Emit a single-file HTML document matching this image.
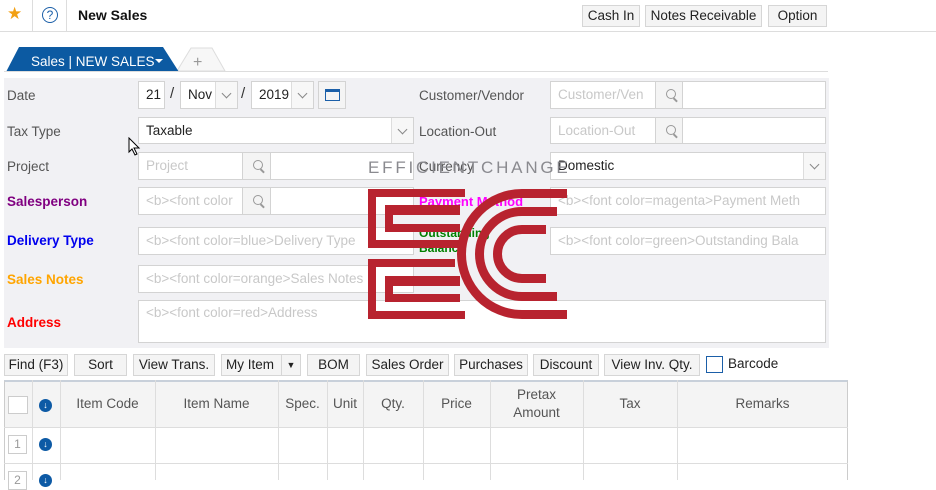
<!DOCTYPE html>
<html><head><style>
*{box-sizing:border-box;margin:0;padding:0}
body{width:936px;height:480px;overflow:hidden;background:#fff;font-family:"Liberation Sans",sans-serif;font-size:13px;color:#333;position:relative}
.a{position:absolute}
.btn{position:absolute;border:1px solid #d6d6d6;background:#f4f4f4;height:22px;line-height:20px;text-align:center;font-size:13.5px;color:#222}
.lbl{position:absolute;left:7px;font-size:13.5px;color:#555}
.rl{position:absolute;left:419px;font-size:13.5px;color:#555}
.f{position:absolute;background:#fff;border:1px solid #d3d3d3;height:28px;line-height:26px;padding-left:7px;color:#c8c8c8;font-size:13.5px;white-space:nowrap;overflow:hidden}
.s{position:absolute;background:#f4f4f4;border:1px solid #d3d3d3;height:28px}
.s:after{content:"";position:absolute;left:10px;top:7px;width:8px;height:8px;border:1.5px solid #999;border-radius:50%}
.s:before{content:"";position:absolute;left:17px;top:17px;width:5px;height:1.5px;background:#999;transform:rotate(45deg)}
.dd{position:absolute;width:22px;border-left:1px solid #ddd;background:#f7f7f7;top:0;bottom:0;right:0}
.dd:after{content:"";position:absolute;left:7px;top:8px;width:6px;height:6px;border-right:1px solid #888;border-bottom:1px solid #888;transform:rotate(45deg)}
b.c{font-weight:bold;position:absolute;left:7px;font-size:13.5px}
.vl{position:absolute;top:380px;width:1px;height:100px;background:#ddd}
.hd{position:absolute;top:380px;height:47px;display:flex;align-items:center;justify-content:center;text-align:center;font-size:13.5px;color:#555;line-height:18px}
.dn{position:absolute;width:13px;height:13px;border-radius:50%;background:#0d5aa5;color:#fff;font-size:9px;line-height:13px;text-align:center;font-weight:bold}
</style></head><body>
<div class="a" style="left:7px;top:4px;color:#f2a013;font-size:17px">★</div>
<div class="a" style="left:32px;top:0;width:1px;height:31px;background:#ddd"></div>
<div class="a" style="left:42px;top:7px;width:16px;height:16px;border:1.3px solid #1b5fa8;border-radius:50%;color:#1b5fa8;font-size:12px;line-height:14px;text-align:center">?</div>
<div class="a" style="left:66px;top:0;width:1px;height:31px;background:#ddd"></div>
<div class="a" style="left:78px;top:7px;font-weight:bold;font-size:14px;color:#111">New Sales</div>
<div class="a" style="left:0;top:31px;width:936px;height:1px;background:#ddd"></div>
<div class="btn" style="left:582px;top:5px;width:58px">Cash In</div>
<div class="btn" style="left:645px;top:5px;width:117px">Notes Receivable</div>
<div class="btn" style="left:768px;top:5px;width:59px">Option</div>
<svg class="a" style="left:0;top:44px" width="240" height="30"><path d="M177 27 L191 4 L212 4 L225 27 Z" fill="#f7f7f7" stroke="#ddd"/><text x="193" y="23" font-size="16" fill="#999" font-family="Liberation Sans">+</text><path d="M6 28 L19 3 L163 3 L179 28 Z" fill="#0c5aa2"/><text x="31" y="22" font-size="13.5" fill="#fff" font-family="Liberation Sans">Sales | NEW SALES</text><path d="M155 15 L163 15 L159 19Z" fill="#fff"/></svg>
<div class="a" style="left:4px;top:71px;width:824px;height:1px;background:#ddd"></div>
<div class="a" style="left:4px;top:78px;width:825px;height:270px;background:#f1f1f4"></div>
<div class="lbl" style="top:88px">Date</div>
<div class="f" style="left:138px;top:81px;width:27px;color:#222">21</div>
<div class="a" style="left:170px;top:85px;font-size:15px">/</div>
<div class="f" style="left:180px;top:81px;width:58px;color:#222">Nov<span class="dd"></span></div>
<div class="a" style="left:241px;top:85px;font-size:15px">/</div>
<div class="f" style="left:251px;top:81px;width:63px;color:#222">2019<span class="dd"></span></div>
<div class="a" style="left:318px;top:81px;width:28px;height:28px;border:1px solid #d3d3d3;background:#f4f4f4"><div class="a" style="left:6px;top:7px;width:15px;height:12px;border:1.5px solid #1b5fa8;border-top-width:3px"></div></div>
<div class="lbl" style="top:124px">Tax Type</div>
<div class="f" style="left:138px;top:117px;width:276px;height:27px;color:#222">Taxable<span class="dd"></span></div>
<div class="lbl" style="top:159px">Project</div>
<div class="f" style="left:138px;top:152px;width:105px">Project</div><div class="s" style="left:242px;top:152px;width:29px"></div><div class="f" style="left:270px;top:152px;width:144px"></div>
<b class="c" style="top:194px;color:#800080">Salesperson</b>
<div class="f" style="left:138px;top:187px;width:105px">&lt;b&gt;&lt;font color</div><div class="s" style="left:242px;top:187px;width:29px"></div><div class="f" style="left:270px;top:187px;width:144px"></div>
<b class="c" style="top:233px;color:#0000ee">Delivery Type</b>
<div class="f" style="left:138px;top:227px;width:276px">&lt;b&gt;&lt;font color=blue&gt;Delivery Type</div>
<b class="c" style="top:272px;color:#ffa500">Sales Notes</b>
<div class="f" style="left:138px;top:265px;width:276px">&lt;b&gt;&lt;font color=orange&gt;Sales Notes</div>
<b class="c" style="top:315px;color:#ff0000">Address</b>
<div class="f" style="left:138px;top:300px;width:688px;height:43px;line-height:24px">&lt;b&gt;&lt;font color=red&gt;Address</div>
<div class="rl" style="top:88px">Customer/Vendor</div>
<div class="f" style="left:550px;top:81px;width:106px">Customer/Ven</div><div class="s" style="left:655px;top:81px;width:28px"></div><div class="f" style="left:682px;top:81px;width:144px"></div>
<div class="rl" style="top:124px">Location-Out</div>
<div class="f" style="left:550px;top:117px;width:106px;height:27px">Location-Out</div><div class="s" style="left:655px;top:117px;width:28px;height:27px"></div><div class="f" style="left:682px;top:117px;width:144px;height:27px"></div>
<div class="rl" style="top:159px">Currency</div>
<div class="f" style="left:550px;top:152px;width:276px;color:#222">Domestic<span class="dd"></span></div>
<b class="a" style="left:419px;top:194px;color:#ff00ff;font-size:13px">Payment Method</b>
<div class="f" style="left:550px;top:187px;width:276px">&lt;b&gt;&lt;font color=magenta&gt;Payment Meth</div>
<b class="a" style="left:419px;top:226px;color:#008000;font-size:12px;line-height:15px">Outstanding<br>Balance</b>
<div class="f" style="left:550px;top:227px;width:276px">&lt;b&gt;&lt;font color=green&gt;Outstanding Bala</div>
<svg class="a" style="left:128px;top:137px" width="14" height="20"><path d="M1 1 L1 15 L4 12 L7 18 L9 17 L6 11 L11 11 Z" fill="#fff" stroke="#000"/></svg>
<div class="a" style="left:368px;top:158px;font-size:17px;letter-spacing:2.8px;color:#8a8a8f">EFFICIENTCHANGE</div>
<svg class="a" style="left:360px;top:180px" width="220" height="150">
<g fill="#b8232f" fill-rule="evenodd">
<path d="M8 9 H105 V17 H16 V60 H100 V68 H8 Z"/>
<path d="M25 25 H100 V52 H25 Z M33 35 H100 V44 H33 Z"/>
<path d="M8 79 H95 V87 H16 V131 H105 V139 H8 Z"/>
<path d="M25 96 H100 V122 H25 Z M33 106 H100 V114 H33 Z"/>
</g>
<g fill="none" stroke="#b8232f" stroke-width="9">
<path d="M207 13.5 H162 A60.5 60.5 0 0 0 162 134.5 H207"/>
<path d="M197 31.5 H162 A42.5 42.5 0 0 0 162 116.5 H197"/>
<path d="M186 49.5 H162 A24.5 24.5 0 0 0 162 98.5 H186"/>
</g></svg>
<div class="btn" style="left:4px;top:354px;width:64px">Find (F3)</div>
<div class="btn" style="left:74px;top:354px;width:53px">Sort</div>
<div class="btn" style="left:133px;top:354px;width:82px">View Trans.</div>
<div class="btn" style="left:221px;top:354px;width:80px;text-align:left;padding-left:4px">My Item<span class="a" style="right:0;top:0;width:19px;height:20px;border-left:1px solid #d6d6d6;font-size:9px;text-align:center">▼</span></div>
<div class="btn" style="left:307px;top:354px;width:53px">BOM</div>
<div class="btn" style="left:366px;top:354px;width:83px">Sales Order</div>
<div class="btn" style="left:454px;top:354px;width:74px">Purchases</div>
<div class="btn" style="left:533px;top:354px;width:66px">Discount</div>
<div class="btn" style="left:604px;top:354px;width:96px">View Inv. Qty.</div>
<div class="a" style="left:706px;top:356px;width:17px;height:17px;border:1.5px solid #1b5fa8;background:#fff"></div>
<div class="a" style="left:728px;top:356px;font-size:13.5px;color:#222">Barcode</div>
<div class="a" style="left:4px;top:380px;width:844px;height:100px;border:1px solid #ccc;border-top:2px solid #c8d0da;border-bottom:none"></div>
<div class="a" style="left:5px;top:382px;width:842px;height:45px;background:#f4f4f4"></div>
<div class="a" style="left:4px;top:427px;width:844px;height:1px;background:#ddd"></div>
<div class="a" style="left:4px;top:463px;width:844px;height:1px;background:#ddd"></div>
<div class="vl" style="left:32px"></div><div class="vl" style="left:60px"></div><div class="vl" style="left:155px"></div><div class="vl" style="left:278px"></div><div class="vl" style="left:327px"></div><div class="vl" style="left:363px"></div><div class="vl" style="left:423px"></div><div class="vl" style="left:490px"></div><div class="vl" style="left:583px"></div><div class="vl" style="left:677px"></div>
<div class="a" style="left:8px;top:396px;width:20px;height:18px;border:1px solid #ccc;background:#fff"></div>
<div class="dn" style="left:39px;top:399px">↓</div>
<div class="hd" style="left:60px;width:95px">Item Code</div>
<div class="hd" style="left:155px;width:123px">Item Name</div>
<div class="hd" style="left:278px;width:49px">Spec.</div>
<div class="hd" style="left:327px;width:36px">Unit</div>
<div class="hd" style="left:363px;width:60px">Qty.</div>
<div class="hd" style="left:423px;width:67px">Price</div>
<div class="hd" style="left:490px;width:93px">Pretax<br>Amount</div>
<div class="hd" style="left:583px;width:94px">Tax</div>
<div class="hd" style="left:677px;width:171px">Remarks</div>
<div class="a" style="left:8px;top:435px;width:19px;height:19px;border:1px solid #ccc;color:#999;text-align:center;line-height:17px;font-size:12px">1</div>
<div class="dn" style="left:39px;top:438px">↓</div>
<div class="a" style="left:8px;top:471px;width:19px;height:19px;border:1px solid #ccc;color:#999;text-align:center;line-height:17px;font-size:12px">2</div>
<div class="dn" style="left:39px;top:474px">↓</div>
</body></html>
